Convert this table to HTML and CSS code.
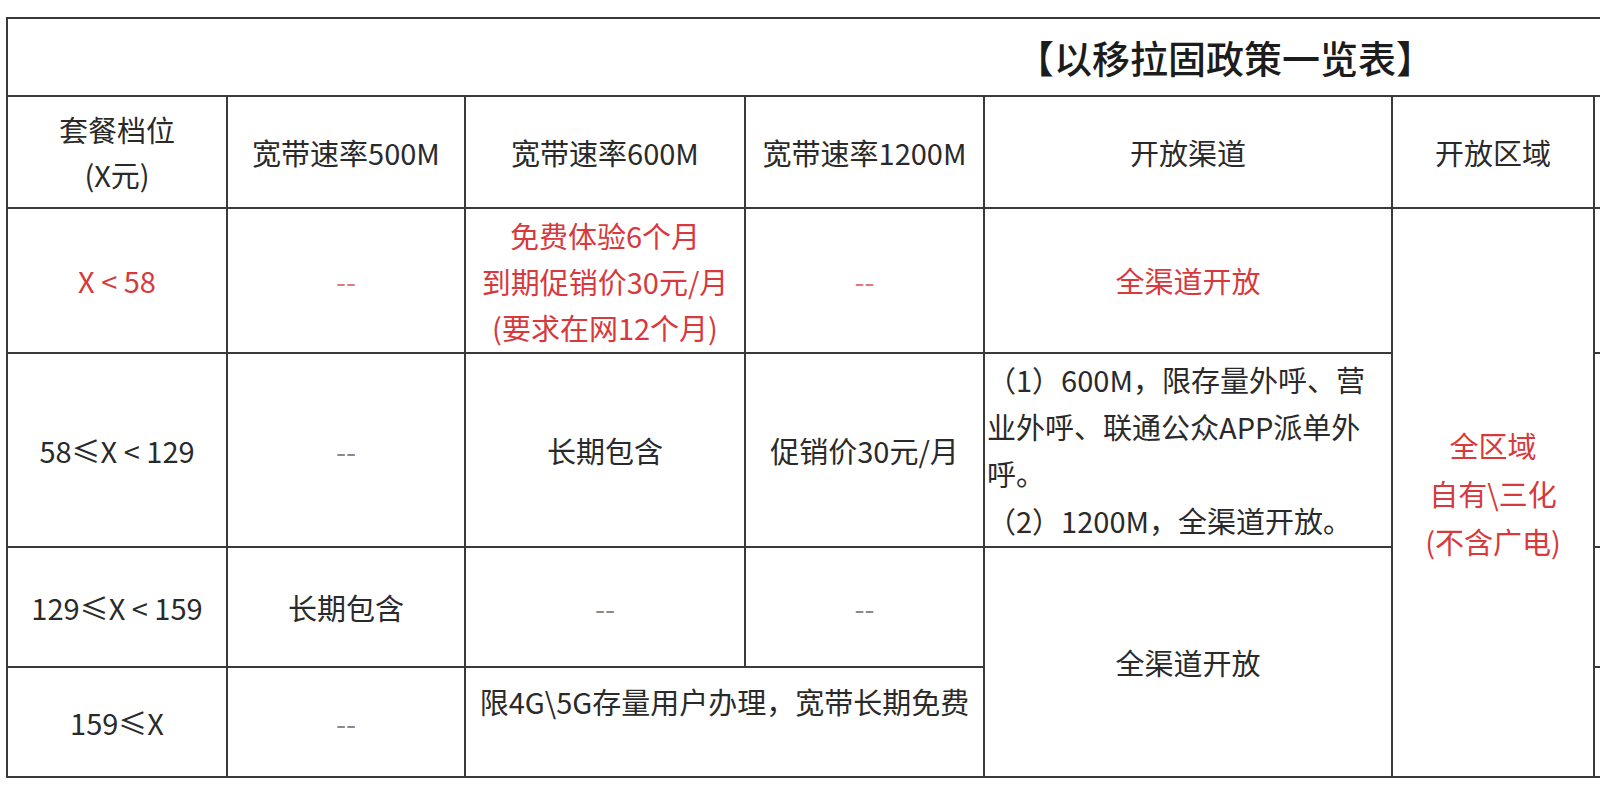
FILE: index.html
```html
<!DOCTYPE html>
<html lang="zh-CN">
<head>
<meta charset="utf-8">
<title>以移拉固政策一览表</title>
<link rel="stylesheet" href="styles.css">
</head>
<body>
<div class="page">
  <table class="policy">
    <colgroup>
      <col class="c1"><col class="c2"><col class="c3"><col class="c4"><col class="c5"><col class="c6"><col class="c7">
    </colgroup>
    <tr class="r-title">
      <td colspan="7" class="title">【以移拉固政策一览表】</td>
    </tr>
    <tr class="r-head">
      <td class="lines-h">套餐档位<br>(X元)</td>
      <td>宽带速率500M</td>
      <td>宽带速率600M</td>
      <td>宽带速率1200M</td>
      <td>开放渠道</td>
      <td>开放区域</td>
      <td class="edge"></td>
    </tr>
    <tr class="r1">
      <td class="red">X &lt; 58</td>
      <td class="dash red-dash">--</td>
      <td class="red lines">免费体验6个月<br>到期促销价30元/月<br>(要求在网12个月)</td>
      <td class="dash red-dash">--</td>
      <td class="red">全渠道开放</td>
      <td rowspan="4" class="red lines-z">全区域<br>自有\三化<br>(不含广电)</td>
      <td class="edge"></td>
    </tr>
    <tr class="r2">
      <td>58≤X &lt; 129</td>
      <td class="dash">--</td>
      <td>长期包含</td>
      <td>促销价30元/月</td>
      <td class="channel">（1）600M，限存量外呼、营<br>业外呼、联通公众APP派单外<br>呼。<br>（2）1200M，全渠道开放。</td>
      <td class="edge"></td>
    </tr>
    <tr class="r3">
      <td>129≤X &lt; 159</td>
      <td>长期包含</td>
      <td class="dash">--</td>
      <td class="dash">--</td>
      <td rowspan="2">全渠道开放</td>
      <td class="edge"></td>
    </tr>
    <tr class="r4">
      <td>159≤X</td>
      <td class="dash">--</td>
      <td colspan="2" class="top">限4G\5G存量用户办理，宽带长期免费</td>
      <td class="edge"></td>
    </tr>
  </table>
</div>
</body>
</html>
```

FILE: styles.css
```css
html, body {
  margin: 0;
  padding: 0;
  background: #ffffff;
}

body {
  width: 1600px;
  height: 800px;
  overflow: hidden;
  font-family: "Noto Sans CJK SC", "Noto Sans", sans-serif;
  color: #2a2a2a;
}

.page {
  padding: 17px 0 0 6px;
}

.policy {
  border-collapse: collapse;
  table-layout: fixed;
  width: 1647px;
  font-size: 29px;
}

.c1 { width: 220px; }
.c2 { width: 238px; }
.c3 { width: 280px; }
.c4 { width: 239px; }
.c5 { width: 408px; }
.c6 { width: 202px; }
.c7 { width: 60px; }

.policy td {
  border: 2px solid #3a3a3a;
  padding: 0;
  text-align: center;
  vertical-align: middle;
  line-height: 1.2;
  white-space: nowrap;
}

.r-title { height: 78px; }
.r-head { height: 112px; }
.r1 { height: 145px; }
.r2 { height: 194px; }
.r3 { height: 120px; }
.r4 { height: 110px; }

.policy td.title {
  text-align: left;
  padding-left: 1008px;
  font-size: 38px;
  font-weight: 500;
  color: #1c1c1c;
  border-right: none;
}

.policy td.lines-h { line-height: 45px; }
.policy td.lines { line-height: 46px; }
.policy td.lines-z { line-height: 48px; }

.red { color: #d8393c; }

.dash { color: #8a8a8a; }
.red-dash { color: #e07a7c; }

.policy td.channel {
  text-align: left;
  padding-left: 2px;
  line-height: 47px;
}

.policy td.top {
  vertical-align: top;
  padding-top: 16px;
}

.policy td.edge {
  border-right: none;
}
```
